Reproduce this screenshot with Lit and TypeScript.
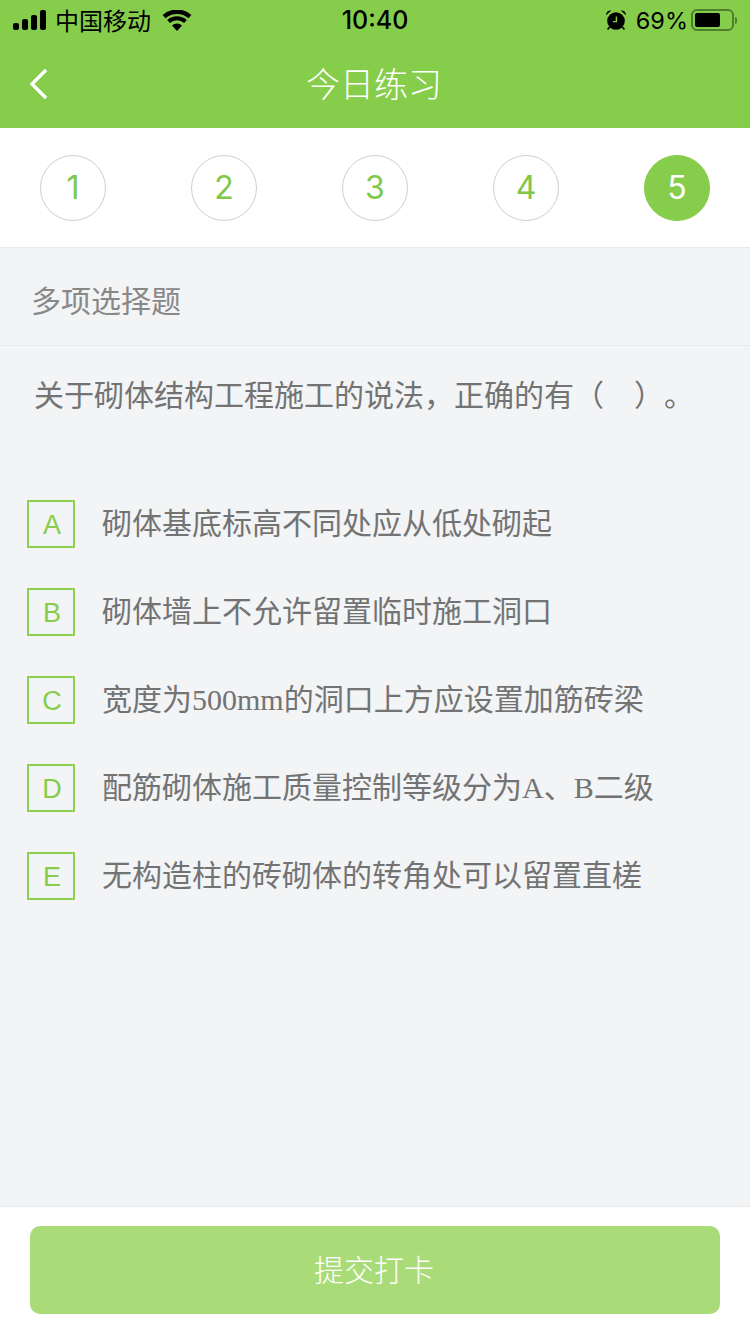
import { LitElement, html, css, svg } from 'lit'
import { customElement } from 'lit/decorators.js'

const OPTIONS = [
  { key: 'A', text: '砌体基底标高不同处应从低处砌起' },
  { key: 'B', text: '砌体墙上不允许留置临时施工洞口' },
  { key: 'C', text: '宽度为500mm的洞口上方应设置加筋砖梁' },
  { key: 'D', text: '配筋砌体施工质量控制等级分为A、B二级' },
  { key: 'E', text: '无构造柱的砖砌体的转角处可以留置直槎' },
]

const signalIcon = svg`<svg class="signal" width="34" height="20" viewBox="0 0 34 20">
  <rect x="0" y="13" width="6" height="7" rx="2"/>
  <rect x="9" y="9" width="6" height="11" rx="2"/>
  <rect x="18" y="5" width="6" height="15" rx="2"/>
  <rect x="27" y="0" width="6" height="20" rx="2"/>
</svg>`

const wifiIcon = svg`<svg class="wifi" width="30" height="21" viewBox="0 0 30 21">
  <path d="M15 21l-5-5.6a7.4 7.4 0 0 1 10 0z"/>
  <path d="M7.9 13.1l-2.7-3a14.6 14.6 0 0 1 19.6 0l-2.7 3a10.6 10.6 0 0 0-14.2 0z"/>
  <path d="M3.5 8.2L.6 5a21.6 21.6 0 0 1 28.8 0l-2.9 3.2a17.5 17.5 0 0 0-23 0z"/>
</svg>`

const alarmIcon = svg`<svg class="alarm" width="22" height="22" viewBox="0 0 22 22">
  <circle cx="11" cy="12" r="8.8"/>
  <path d="M1 6.2a4.4 4.4 0 0 1 5.4-4.6zM21 6.2a4.4 4.4 0 0 0-5.4-4.6z"/>
  <path d="M4.6 18l-2 2.6M17.4 18l2 2.6" stroke="#000" stroke-width="1.6" fill="none"/>
  <path d="M11.4 7.6v5H8" stroke="#86cd4c" stroke-width="1.4" fill="none"/>
</svg>`

@customElement('app-root')
export class AppRoot extends LitElement {
  static styles = css`
    :host {
      display: block;
      width: 750px;
      height: 1334px;
      font-family: 'Liberation Sans', 'Noto Sans CJK SC', sans-serif;
    }

    .page {
      display: flex;
      flex-direction: column;
      height: 1334px;
      background: #f2f4f6;
    }

    .header {
      height: 128px;
      flex: none;
      background: #86cd4c;
    }

    .status {
      height: 40px;
      padding: 0 13px;
      display: grid;
      grid-template-columns: 1fr auto 1fr;
      align-items: center;
      color: #000;
    }

    .status-left,
    .status-right {
      display: flex;
      align-items: center;
    }

    .status-right {
      justify-content: flex-end;
    }

    .carrier {
      font-size: 24px;
      margin-left: 8px;
      margin-right: 11px;
      padding-bottom: 2px;
    }

    .time {
      font-size: 25px;
      font-weight: 500;
      font-family: 'Inter', 'Liberation Sans', sans-serif;
    }

    .percent {
      font-size: 23.5px;
      margin-left: 9px;
      margin-right: 3px;
      font-family: 'Inter', 'Liberation Sans', sans-serif;
    }

    .signal,
    .wifi,
    .alarm {
      fill: #000;
      display: block;
    }

    .battery {
      display: flex;
      align-items: center;
      gap: 1px;
    }

    .battery-body {
      width: 43px;
      height: 22px;
      box-sizing: border-box;
      border: 2px solid #4f7f2c;
      border-radius: 6px;
      padding: 2px;
    }

    .battery-level {
      width: 25px;
      height: 14px;
      background: #000;
      border-radius: 2px;
    }

    .battery-cap {
      width: 2px;
      height: 7px;
      background: #4f7f2c;
      border-radius: 0 2px 2px 0;
    }

    .nav {
      height: 88px;
      box-sizing: border-box;
      padding-bottom: 4px;
      position: relative;
      display: flex;
      align-items: center;
      justify-content: center;
    }

    .back {
      position: absolute;
      left: 28px;
      top: 28px;
      display: block;
    }

    .title {
      color: #fff;
      font-size: 34px;
      font-weight: 300;
      margin-left: -2px;
    }

    .steps {
      height: 120px;
      flex: none;
      box-sizing: border-box;
      background: #fff;
      border-bottom: 1px solid #e8e9eb;
      padding: 0 40px;
      display: flex;
      align-items: center;
      justify-content: space-between;
    }

    .step {
      width: 66px;
      height: 66px;
      box-sizing: border-box;
      border: 1px solid #cfcfcf;
      border-radius: 50%;
      display: flex;
      align-items: center;
      justify-content: center;
      color: #80c74a;
      font-size: 32px;
      font-family: 'Inter', 'Liberation Sans', sans-serif;
      font-weight: 400;
    }

    .step.active {
      background: #86cd4c;
      border-color: #86cd4c;
      color: #fff;
    }

    .type {
      height: 98px;
      flex: none;
      box-sizing: border-box;
      border-bottom: 1px solid #e8e9eb;
      padding: 4px 31px 0;
      display: flex;
      align-items: center;
      color: #888;
      font-size: 30px;
    }

    .question {
      padding: 30px 34px 0;
      color: #737373;
      font-size: 30px;
      line-height: 40px;
      text-spacing-trim: space-all;
    }

    .options {
      flex: 1;
      padding: 84px 27px 0;
      display: flex;
      flex-direction: column;
      gap: 40px;
    }

    .option {
      display: flex;
      align-items: center;
      gap: 27px;
      height: 48px;
    }

    .key {
      width: 48px;
      height: 48px;
      flex: none;
      box-sizing: border-box;
      border: 2px solid #8ccf55;
      padding: 2px 0 0 2px;
      display: flex;
      align-items: center;
      justify-content: center;
      color: #86cd4c;
      font-size: 27px;
    }

    .option-text {
      color: #737373;
      font-size: 30px;
      padding-bottom: 6px;
      font-family: 'Liberation Serif', 'Noto Sans CJK SC', serif;
    }

    .footer {
      height: 128px;
      flex: none;
      box-sizing: border-box;
      background: #fff;
      border-top: 1px solid #e8e9eb;
      padding: 19px 30px 0;
    }

    .submit {
      height: 88px;
      box-sizing: border-box;
      padding: 0 2px 4px 0;
      border-radius: 10px;
      background: #a9dc79;
      color: #fff;
      font-size: 30px;
      font-weight: 300;
      display: flex;
      align-items: center;
      justify-content: center;
    }
  `

  render() {
    return html`
      <div class="page">
        <div class="header">
          <div class="status">
            <div class="status-left">
              ${signalIcon}
              <span class="carrier">中国移动</span>
              ${wifiIcon}
            </div>
            <div class="time">10:40</div>
            <div class="status-right">
              ${alarmIcon}
              <span class="percent">69%</span>
              <div class="battery">
                <div class="battery-body"><div class="battery-level"></div></div>
                <div class="battery-cap"></div>
              </div>
            </div>
          </div>
          <div class="nav">
            <svg class="back" width="22" height="32" viewBox="0 0 22 32" fill="none" stroke="#fff" stroke-width="3.4">
              <path d="M18 2L4 16l14 14"/>
            </svg>
            <div class="title">今日练习</div>
          </div>
        </div>
        <div class="steps">
          ${[1, 2, 3, 4, 5].map(
            (n) => html`<div class="step ${n === 5 ? 'active' : ''}">${n}</div>`
          )}
        </div>
        <div class="type">多项选择题</div>
        <div class="question">关于砌体结构工程施工的说法，正确的有（\u3000）。</div>
        <div class="options">
          ${OPTIONS.map(
            (o) => html`
              <div class="option">
                <div class="key">${o.key}</div>
                <div class="option-text">${o.text}</div>
              </div>
            `
          )}
        </div>
        <div class="footer">
          <div class="submit">提交打卡</div>
        </div>
      </div>
    `
  }
}
